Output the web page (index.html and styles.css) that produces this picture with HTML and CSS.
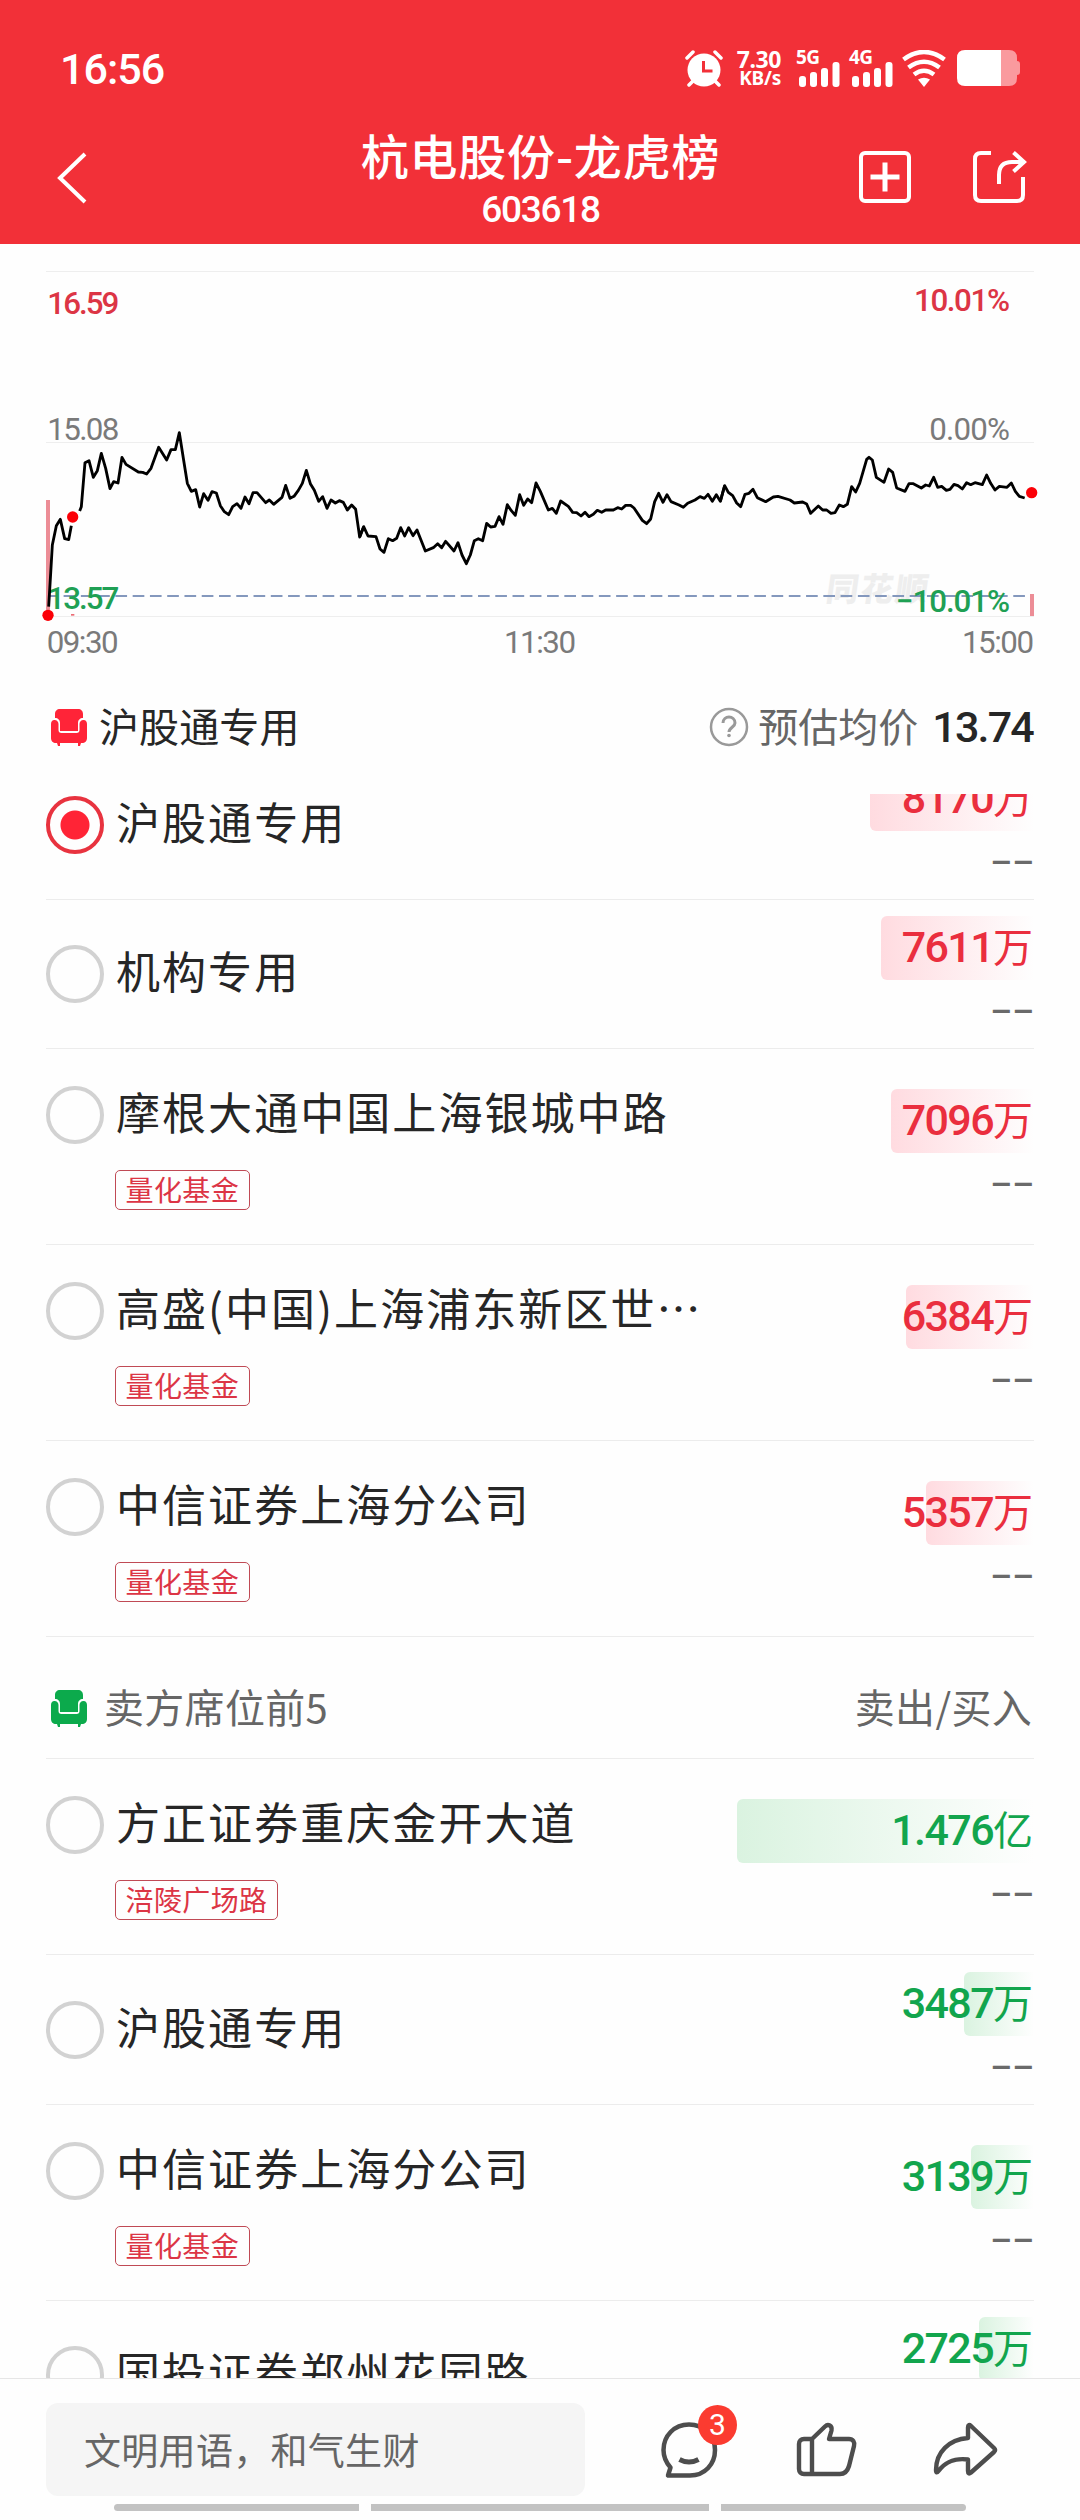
FILE: index.html
```html
<!DOCTYPE html>
<html lang="zh-CN">
<head>
<meta charset="utf-8">
<meta name="viewport" content="width=1080">
<title>杭电股份-龙虎榜</title>
<link rel="stylesheet" href="styles.css">
</head>
<body>
<svg class="defs" width="0" height="0" aria-hidden="true">
  <symbol id="chair" viewBox="0 0 36 38">
    <path d="M9 1h18c3 0 5 2 5 5v4c-3 0-5 2-5 5v8H9v-8c0-3-2-5-5-5V6c0-3 2-5 5-5z"/>
    <path d="M3.500 12C6 12 7.500 14 7.500 16v6c0 2 1 3 3 3h15c2 0 3-1 3-3v-6c0-2 1.500-4 4-4s3.500 2 3.500 4v14c0 3-2 5-5 5h-1l-1 3h-2v-3H9v3H7l-1-3H5c-3 0-5-2-5-5V16c0-2 1-4 3.500-4z"/>
  </symbol>
  <symbol id="signal" viewBox="0 0 41 26">
    <rect x="0" y="15" width="7" height="11" rx="3"/><rect x="11" y="11" width="7" height="15" rx="3"/><rect x="22" y="7" width="7" height="19" rx="3"/><rect x="33.500" y="1" width="7" height="25" rx="3"/>
  </symbol>
</svg>
<div class="phone">
  <header class="header">
    <div class="status">
      <span class="clock">16:56</span>
      <div class="status-icons">
        <svg class="alarm" viewBox="0 0 38 37" width="38" height="37">
          <circle cx="19" cy="20" r="16.500" fill="#fff"/>
          <path d="M2 8l6-6M36 8l-6-6M4 35l6-6M34 35l-6-6" stroke="#fff" stroke-width="3.500" stroke-linecap="round"/>
          <path d="M18.500 11v10h9" fill="none" stroke="#f23038" stroke-width="3"/>
        </svg>
        <div class="speed"><b>7.30</b><b>KB/s</b></div>
        <div class="net"><b>5G</b><svg width="41" height="26"><use href="#signal"/></svg></div>
        <div class="net"><b>4G</b><svg width="41" height="26"><use href="#signal"/></svg></div>
        <svg class="wifi" viewBox="0 0 46 37" width="46" height="37">
          <path d="M2.500 9.500Q23-5.500 43.500 9.500M7.500 17.500Q23 6 38.500 17.500M13 24.500Q23 17 33 24.500" fill="none" stroke="#fff" stroke-width="4.600"/>
          <path d="M17 29.500q6-3.500 12 0l-6 7.500z" fill="#fff"/>
        </svg>
        <svg class="battery" viewBox="0 0 63 36" width="63" height="36">
          <path d="M44 0h8q8 0 8 8v3q3 0 3 3v8q0 3-3 3v3q0 8-8 8h-8z" fill="#fa9a9e"/>
          <path d="M8 0h36v36H8q-8 0-8-8V8q0-8 8-8z" fill="#fff"/>
        </svg>
      </div>
    </div>
    <div class="nav">
      <svg class="back" viewBox="0 0 32 52" width="32" height="52"><path d="M29 2L4 26l25 24" fill="none" stroke="#fff" stroke-width="4"/></svg>
      <div class="title"><h1>杭电股份-龙虎榜</h1><span>603618</span></div>
      <div class="nav-actions">
        <svg viewBox="0 0 52 52" width="52" height="52" fill="none" stroke="#fff" stroke-width="4"><rect x="2" y="2" width="48" height="48" rx="4"/><path d="M26 11.500v29M11.500 26h29" stroke-width="5"/></svg>
        <svg viewBox="0 0 54 52" width="54" height="52" fill="none" stroke="#fff" stroke-width="4"><path d="M18 2H8q-6 0-6 6v36q0 6 6 6h36q6 0 6-6V26"/><path d="M26 33V24q0-13 13-13h11M40.500 1.500L51 11 40.500 20.500"/></svg>
      </div>
    </div>
  </header>

  <svg class="chart" viewBox="0 0 3240 1260">
    <g stroke="#eeeeee" stroke-width="3"><path d="M138 34.500H3102M138 547.500H3102M138 1069.500H3102"/></g>
    <text class="watermark" x="2474" y="1022" textLength="306" transform="skewX(-8)">同花顺</text>
    <path d="M138 1008H3102" stroke="#8498bd" stroke-width="6" stroke-dasharray="35 16.800" stroke-dashoffset="-1"/>
    <g class="labels">
      <text class="up" x="142" y="161" textLength="216">16.59</text>
      <text class="up" x="2742" y="153" textLength="288">10.01%</text>
      <text x="142" y="539" textLength="216">15.08</text>
      <text x="2788" y="539" textLength="242">0.00%</text>
      <text class="down" x="142" y="1047" textLength="216">13.57</text>
      <text class="down" x="2688" y="1056" textLength="342">−10.01%</text>
      <text x="140" y="1178" textLength="216">09:30</text>
      <text x="1512" y="1178" textLength="216">11:30</text>
      <text x="2886" y="1178" textLength="216">15:00</text>
    </g>
    <path d="M138 720h12v349h-12zM3090 1002h12v66h-12z" fill="#ec8d96"/>
    <rect x="213" y="1062" width="10" height="5" fill="#ec6d76"/>
    <g fill="none" stroke="#000" stroke-width="8.500" stroke-linejoin="round">
      <polyline points="146,1040 152,940 157,855 169,797 181,778 194,836 206,839 214,797"/>
      <polyline points="239,753 244,740 255,608 267,602 280,652 292,632 304,580 317,625 330,686 341,665 354,669 366,592 378,613 415,636 428,637 440,642 453,625 476,562 500,600 513,569 526,569 538,518 550,595 562,670 574,694 587,689 599,741 611,701 624,721 636,695 649,699 661,737 673,755 686,764 698,740 711,731 723,745 735,711 747,731 759,698 771,698 797,728 808,720 821,733 846,712 857,676 870,715 882,709 895,691 907,670 919,631 931,671 943,691 956,724 968,710 981,745 993,720 1006,729 1018,722 1030,727 1042,750 1055,735 1067,748 1079,831 1091,800"/>
      <polyline transform="translate(1080 420)" points="-1,411 11,380 24,408 48,410 60,447 72,457 85,416 98,422 110,415 122,383 134,408 146,383 159,407 171,390 196,453 220,443 233,431 245,443 257,424 282,453 294,428 306,465 319,491 331,465 343,422 355,416 368,422 380,370 392,381 405,379 417,350 429,373 442,314 454,332 466,346 479,284 491,316 503,297 515,308 528,249 541,274 565,330 577,325 589,340 602,303 625,319 638,337 650,338 663,348 675,337 687,350 700,343 712,331 725,337 737,330 760,330 773,323 785,327 797,316 812,316 822,324 847,361 860,371 872,357 884,305 896,280 909,307 921,284 933,305 957,315 970,322 983,310 1005,300 1020,290 1033,295 1044,283 1057,304 1069,284 1081,304 1094,257"/>
      <polyline transform="translate(2160 0)" points="1,724 14,677 25,697 38,707 50,729 62,740 75,703 87,700 99,688 112,713 137,725 160,711 174,709 210,720 223,729 248,726 260,732 272,760 295,738 308,750 320,750 333,760 345,758 358,735 370,740 382,733 395,680 407,696 419,670 440,598 447,592 457,600 469,652 492,667 506,627 518,637 530,684 555,694 567,671 580,671 604,684 617,675 628,678 641,652 653,682 665,679 679,691 690,688 702,673 714,677 727,687 740,668 752,674 765,668 787,674 800,645 812,670 825,690 838,679 861,682 874,669 886,694 898,709 914,714"/>
    </g>
    <g fill="#fb0007"><circle cx="144" cy="1066" r="17"/><circle cx="218" cy="771" r="17"/><circle cx="3095" cy="698" r="17"/></g>
  </svg>

  <section class="summary">
    <svg class="chair red" width="36" height="38"><use href="#chair"/></svg>
    <span class="seat">沪股通专用</span>
    <svg class="help" viewBox="0 0 40 40" width="40" height="40" fill="none" stroke="#999" stroke-width="2.500"><circle cx="20" cy="20" r="18"/><path d="M14 16c0-8 12-8 12 0 0 4-6 4.500-6 9" stroke-width="3"/><circle cx="20" cy="28.500" r="1.800" fill="#999" stroke="none"/></svg>
    <span class="avg-label">预估均价</span>
    <span class="avg">13.74</span>
  </section>

  <main class="list">
    <div class="row first">
      <i class="radio on"></i>
      <div class="seat-info"><div class="name">沪股通专用</div></div>
      <div class="figures"><div class="amount buy"><i class="bar" style="width:164px"></i><span>8170<em>万</em></span></div><div class="none">––</div></div>
    </div>
    <div class="row">
      <i class="radio"></i>
      <div class="seat-info"><div class="name">机构专用</div></div>
      <div class="figures"><div class="amount buy"><i class="bar" style="width:153px"></i><span>7611<em>万</em></span></div><div class="none">––</div></div>
    </div>
    <div class="row tagged">
      <i class="radio"></i>
      <div class="seat-info"><div class="name">摩根大通中国上海银城中路</div><span class="tag">量化基金</span></div>
      <div class="figures"><div class="amount buy"><i class="bar" style="width:143px"></i><span>7096<em>万</em></span></div><div class="none">––</div></div>
    </div>
    <div class="row tagged">
      <i class="radio"></i>
      <div class="seat-info"><div class="name">高盛(中国)上海浦东新区世<span class="dots">⋯</span></div><span class="tag">量化基金</span></div>
      <div class="figures"><div class="amount buy"><i class="bar" style="width:128px"></i><span>6384<em>万</em></span></div><div class="none">––</div></div>
    </div>
    <div class="row tagged">
      <i class="radio"></i>
      <div class="seat-info"><div class="name">中信证券上海分公司</div><span class="tag">量化基金</span></div>
      <div class="figures"><div class="amount buy"><i class="bar" style="width:108px"></i><span>5357<em>万</em></span></div><div class="none">––</div></div>
    </div>
    <div class="group-head">
      <svg class="chair green" width="36" height="38"><use href="#chair"/></svg>
      <span>卖方席位前5</span>
      <span class="columns">卖出/买入</span>
    </div>
    <div class="row tagged">
      <i class="radio"></i>
      <div class="seat-info"><div class="name">方正证券重庆金开大道</div><span class="tag">涪陵广场路</span></div>
      <div class="figures"><div class="amount sell"><i class="bar" style="width:297px"></i><span>1.476<em>亿</em></span></div><div class="none">––</div></div>
    </div>
    <div class="row tall">
      <i class="radio"></i>
      <div class="seat-info"><div class="name">沪股通专用</div></div>
      <div class="figures"><div class="amount sell"><i class="bar" style="width:70px"></i><span>3487<em>万</em></span></div><div class="none">––</div></div>
    </div>
    <div class="row tagged">
      <i class="radio"></i>
      <div class="seat-info"><div class="name">中信证券上海分公司</div><span class="tag">量化基金</span></div>
      <div class="figures"><div class="amount sell"><i class="bar" style="width:63px"></i><span>3139<em>万</em></span></div><div class="none">––</div></div>
    </div>
    <div class="row">
      <i class="radio"></i>
      <div class="seat-info"><div class="name">国投证券郑州花园路</div></div>
      <div class="figures"><div class="amount sell"><i class="bar" style="width:55px"></i><span>2725<em>万</em></span></div><div class="none">––</div></div>
    </div>
  </main>

  <footer class="footer">
    <div class="toolbar">
      <div class="input">文明用语，和气生财</div>
      <div class="comment">
        <svg viewBox="0 0 60 60" width="60" height="60" fill="none" stroke="#4d4d4d" stroke-width="4.500" stroke-linejoin="round"><path d="M30 4.500C15 4.500 4.500 16 4.500 30c0 7 3 13 7 17.500L9 55.500h22C46 55.500 56 44 56 30S45 4.500 30 4.500z"/><path d="M20.500 39.500q9.500 5 19 0" stroke-width="5"/></svg>
        <span class="badge">3</span>
      </div>
      <svg class="like" viewBox="0 0 62 58" width="62" height="58" fill="none" stroke="#4d4d4d" stroke-width="4.400" stroke-linejoin="round"><path d="M16 18L29 5.500c3-3 7.500-1 6.500 4L33 18h20c4 0 6 3 5 7l-5 20c-1.500 5-4 8-9 8H8c-3 0-5-2-5-5V23c0-3 2-5 5-5h8V53"/></svg>
      <svg class="share" viewBox="0 0 66 58" width="66" height="58" fill="none" stroke="#4d4d4d" stroke-width="4.400" stroke-linejoin="round"><path d="M36 18C17 19.500 4 32 4 50c0 3 1 3 2.500 1C14 41 23 38 36 39.500V51q0 4 3 1.500L62 32q2-2 0-4L39 6q-3-2.500-3 1.500z"/></svg>
    </div>
    <div class="scroll-hint"><i></i><i></i><i></i></div>
  </footer>
</div>
</body>
</html>
```
FILE: styles.css
```css
* { box-sizing: border-box; margin: 0; padding: 0; }
body { background: #fefefe; }
i, em { font-style: normal; }
svg { display: block; flex: none; }
.defs { position: absolute; }
.phone {
  width: 1080px; height: 2520px; overflow: hidden;
  display: flex; flex-direction: column;
  font-family: "Noto Sans CJK SC", sans-serif; color: #262626; white-space: nowrap;
}

/* header */
.header { height: 244px; flex: none; background: #f23038; color: #fff; }
.status { display: flex; justify-content: space-between; height: 136px; padding: 50px 60px 0 60px; }
.clock { font: 500 43px/38px Roboto, sans-serif; letter-spacing: -1px; }
.status-icons { display: flex; align-items: flex-start; }
.speed { width: 45px; margin-left: 13px; margin-right: 1px; display: flex; flex-direction: column; align-items: flex-end; }
.speed b:first-child { font: 700 23px/18px "Noto Sans", sans-serif; letter-spacing: -0.4px; }
.speed b:last-child { font: 700 19px/20px "Noto Sans", sans-serif; letter-spacing: -0.2px; }
.net { width: 43px; margin-left: 14px; height: 37px; }
.net + .net { margin-left: 10px; }
.net b { display: block; height: 11px; font: 700 19px/15px "Noto Sans", sans-serif; letter-spacing: -0.5px; }
.net svg { margin-left: 3px; fill: #fff; }
.wifi { margin-left: 9px; }
.battery { margin-left: 10px; }
.nav { display: flex; justify-content: space-between; align-items: flex-start; padding: 0 53px 0 56px; }
.back { margin-top: 16px; }
.title { display: flex; flex-direction: column; align-items: center; margin-left: 134px; margin-top: -5px; }
.title h1 { font-size: 48px; font-weight: 500; line-height: 46px; letter-spacing: 0.800px; }
.title span { font: 500 37px/34px Roboto, sans-serif; letter-spacing: -1.300px; margin-top: 16px; }
.nav-actions { display: flex; gap: 62px; margin-top: 15px; }

/* intraday chart */
.chart { width: 1080px; height: 420px; margin-top: 16px; }
.labels { font: 400 94px Roboto, sans-serif; fill: #7a7a7a; }
.labels .up { fill: #dc3545; font-weight: 500; }
.labels .down { fill: #1fa054; font-weight: 500; }
.watermark { font: 900 98px "Noto Sans CJK SC", sans-serif; fill: #eeeeee; transform-origin: 2474px 1022px; }

/* selected seat */
.summary { display: flex; align-items: center; height: 114px; padding: 0 46px 20px 51px; font-size: 40px; line-height: 60px; }
.summary .seat, .avg-label { margin-top: -4px; }
.chair.red { fill: #ff2438; }
.chair.green { fill: #0caa4c; }
.seat { margin-left: 12px; letter-spacing: 0.100px; }
.help { margin-left: auto; }
.avg-label { margin-left: 9px; color: #666; }
.avg { margin-left: 14px; margin-right: 1px; font: 500 43px/1 Roboto, sans-serif; letter-spacing: -1.800px; }

/* seat list */
.list { height: 1584px; overflow: hidden; flex: none; padding: 0 46px; display: flex; flex-direction: column; }
.row { flex: none; display: flex; height: 149px; padding-top: 45px; border-bottom: 1px solid #ececec; }
.row.first { margin-top: -43px; }
.row.tall { height: 150px; padding-top: 46px; }
.row.tagged { height: 196px; padding-top: 37px; }
.radio { width: 58px; height: 58px; flex: none; border: 4px solid #d2d2d2; border-radius: 50%; }
.radio.on { border-color: #e8333f; background: radial-gradient(circle, #ff2436 14px, transparent 15px); }
.seat-info { margin-left: 12px; flex: 1; display: flex; flex-direction: column; align-items: flex-start; }
.name { font-size: 44px; line-height: 58px; letter-spacing: 2.060px; margin-top: -4px; }
.tag { margin-top: 30px; margin-left: -1px; height: 40px; padding: 0 9.500px; border: 1.500px solid #c04a55; border-radius: 5px; font-size: 28px; line-height: 36px; letter-spacing: 0.400px; color: #dc3545; }
.figures { margin-top: -29px; display: flex; flex-direction: column; align-items: flex-end; }
.tagged .figures { margin-top: 3px; }
.amount { position: relative; height: 64px; padding-right: 1px; font: 500 43px/63px Roboto, sans-serif; letter-spacing: -1.600px; }
.amount span { position: relative; }
.amount em { font: 400 40px/1 "Noto Sans CJK SC", sans-serif; letter-spacing: 0; }
.bar { position: absolute; right: 0; top: 0; height: 64px; border-radius: 6px 0 0 6px; }
.buy { color: #ea2e3e; }
.sell { color: #12a54d; }
.buy .bar { background: linear-gradient(90deg, #ffdbe0, #fefefe); }
.sell .bar { background: linear-gradient(90deg, #daf3e0, #fefefe); }
.none { font: 500 34px/62px Roboto, sans-serif; color: #6a6a6a; }
.group-head { flex: none; display: flex; align-items: center; height: 122px; padding: 22px 2px 0 5px; border-bottom: 1px solid #ececec; font-size: 40px; line-height: 60px; color: #666; }
.group-head span { margin-left: 17px; margin-top: -5px; letter-spacing: 0.300px; }
.group-head .chair { margin-top: -2px; }
.group-head .columns { margin-left: auto; }

/* bottom toolbar */
.footer { flex: none; height: 142px; border-top: 1px solid #e6e6e6; }
.toolbar { display: flex; height: 125px; padding: 24px 46px 0; }
.input { width: 539px; height: 93px; padding-left: 38px; border-radius: 12px; background: #f5f5f5; color: #666; font-size: 37px; line-height: 93px; letter-spacing: 0.300px; }
.comment { position: relative; margin-left: 74px; margin-top: 17px; height: 60px; }
.badge { position: absolute; left: 39px; top: -15px; width: 39px; height: 40px; border-radius: 50%; background: #fb3b30; color: #fff; font: 400 30px/40px Roboto, sans-serif; text-align: center; }
.like { margin-left: 77px; margin-top: 18px; }
.share { margin-left: 74px; margin-top: 17px; }
.scroll-hint { display: flex; gap: 12px; margin-left: 114px; }
.scroll-hint i { width: 245px; height: 7px; background: #c2c2c2; }
.scroll-hint i:nth-child(2) { width: 338px; }
.scroll-hint i:first-child { border-radius: 4px 0 0 4px; }
.scroll-hint i:last-child { border-radius: 0 4px 4px 0; }
```
